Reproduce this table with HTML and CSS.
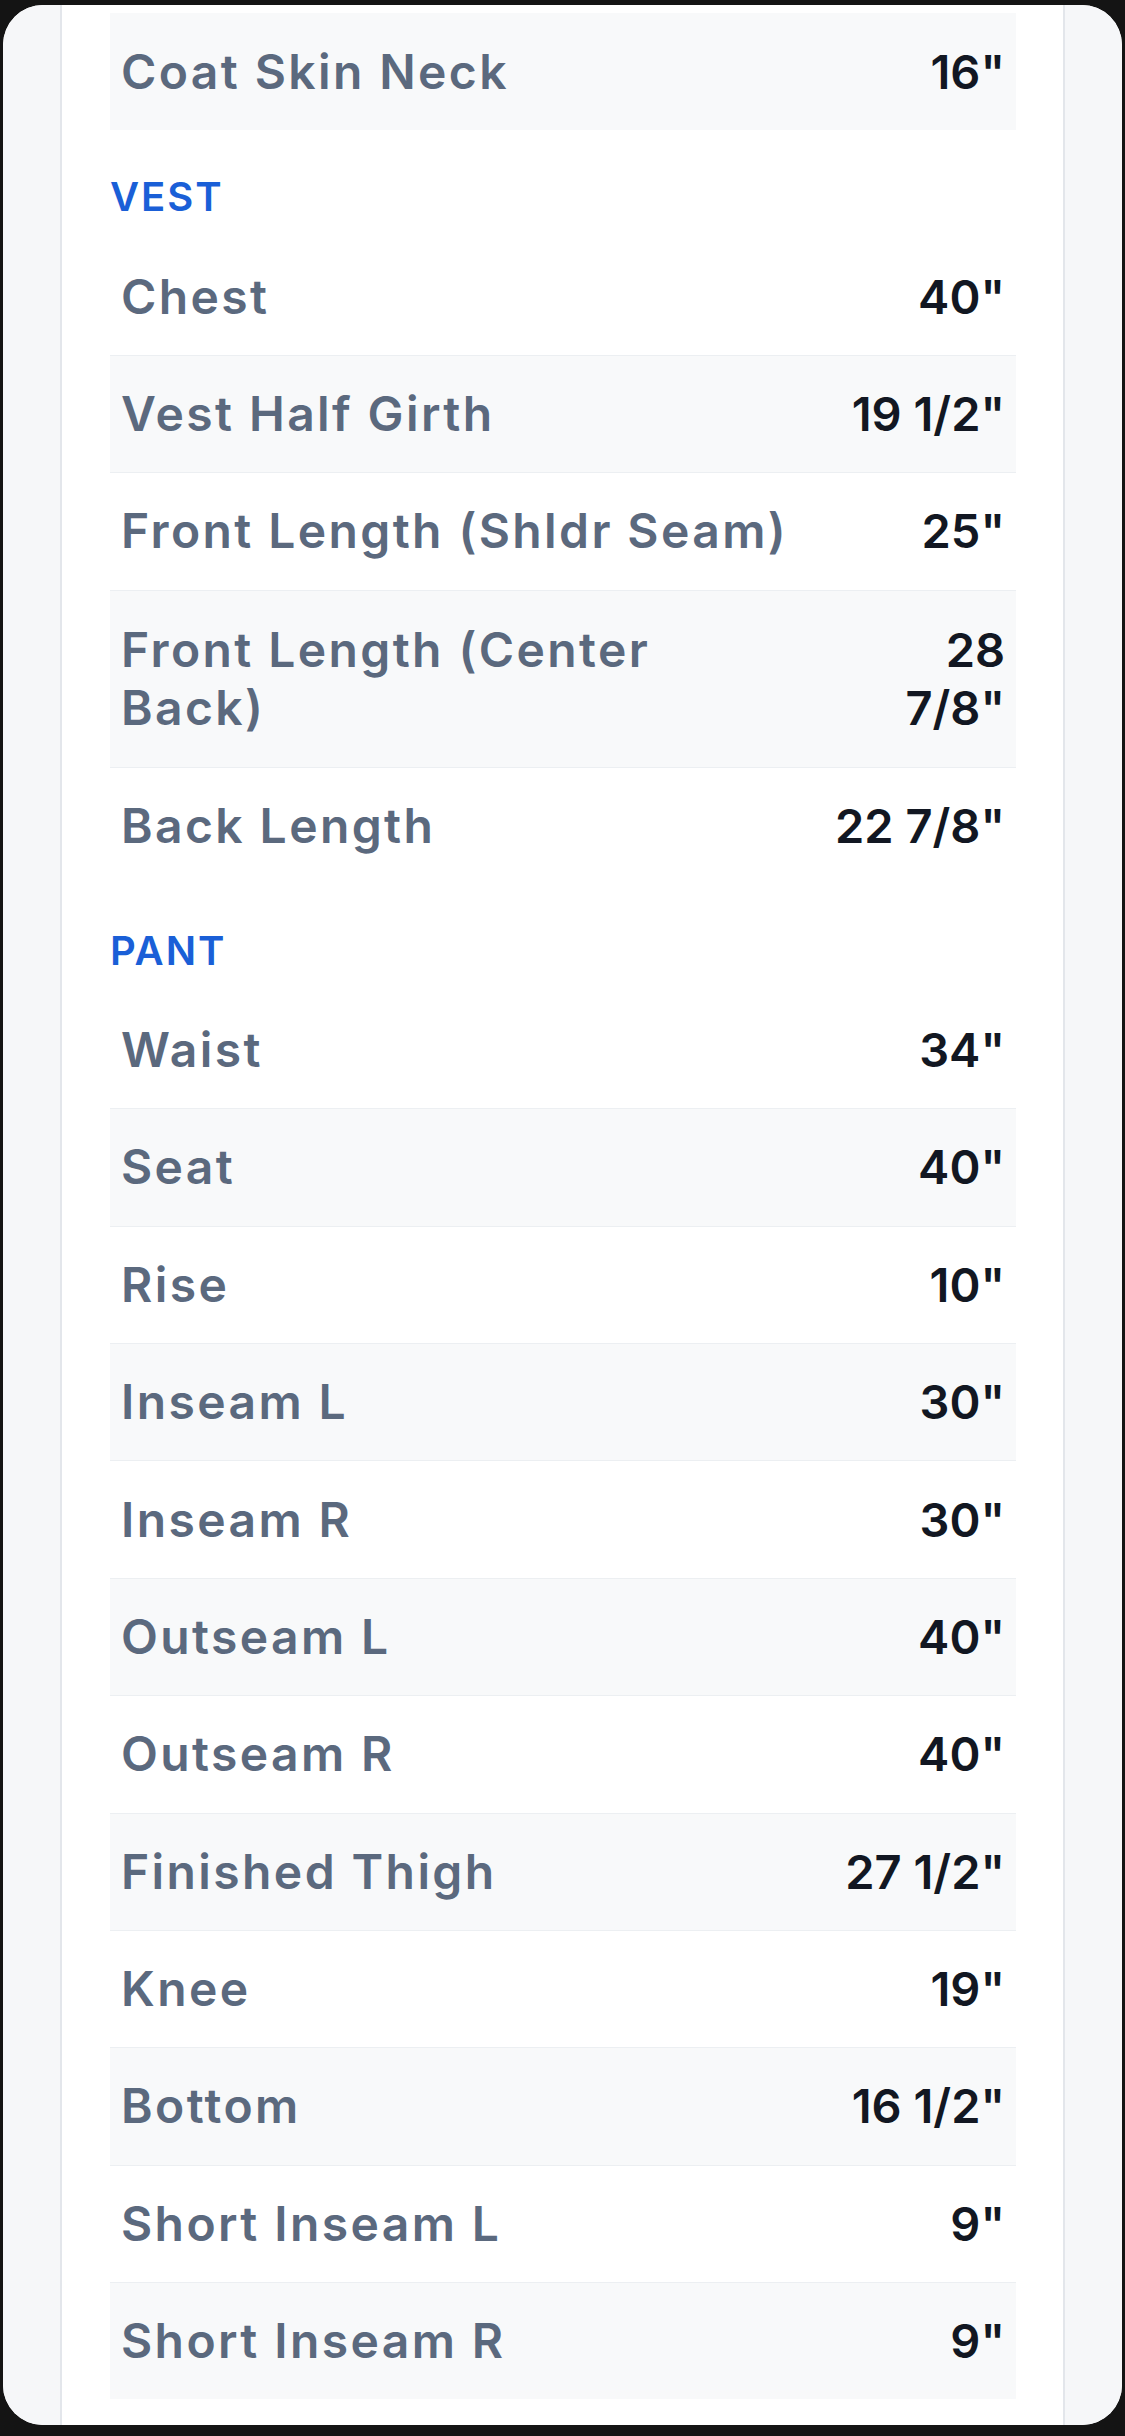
FILE: index.html
```html
<!DOCTYPE html>
<html>
<head>
<meta charset="utf-8">
<link rel="stylesheet" href="styles.css">
</head>
<body>
<div class="frame">
  <div class="gutter gutter-left"></div>
  <main class="sheet">
    <div class="rows">
      <div class="row shade"><span class="label">Coat Skin Neck</span><span class="value">16"</span></div>
    </div>
    <h2 class="section">VEST</h2>
    <div class="rows">
      <div class="row"><span class="label">Chest</span><span class="value">40"</span></div>
      <div class="row shade"><span class="label">Vest Half Girth</span><span class="value">19 1/2"</span></div>
      <div class="row"><span class="label">Front Length (Shldr Seam)</span><span class="value">25"</span></div>
      <div class="row shade tall"><span class="label">Front Length (Center<br>Back)</span><span class="value">28<br>7/8"</span></div>
      <div class="row"><span class="label">Back Length</span><span class="value">22 7/8"</span></div>
    </div>
    <h2 class="section">PANT</h2>
    <div class="rows">
      <div class="row"><span class="label">Waist</span><span class="value">34"</span></div>
      <div class="row shade"><span class="label">Seat</span><span class="value">40"</span></div>
      <div class="row"><span class="label">Rise</span><span class="value">10"</span></div>
      <div class="row shade"><span class="label">Inseam L</span><span class="value">30"</span></div>
      <div class="row"><span class="label">Inseam R</span><span class="value">30"</span></div>
      <div class="row shade"><span class="label">Outseam L</span><span class="value">40"</span></div>
      <div class="row"><span class="label">Outseam R</span><span class="value">40"</span></div>
      <div class="row shade"><span class="label">Finished Thigh</span><span class="value">27 1/2"</span></div>
      <div class="row"><span class="label">Knee</span><span class="value">19"</span></div>
      <div class="row shade"><span class="label">Bottom</span><span class="value">16 1/2"</span></div>
      <div class="row"><span class="label">Short Inseam L</span><span class="value">9"</span></div>
      <div class="row shade"><span class="label">Short Inseam R</span><span class="value">9"</span></div>
    </div>
  </main>
  <div class="gutter gutter-right"></div>
</div>
</body>
</html>
```
FILE: styles.css
```css
* { box-sizing: border-box; }
html, body {
  margin: 0;
  padding: 0;
  background: #141414;
  height: 2436px;
  overflow: hidden;
}
body {
  padding: 5px 3px 11px 3px;
  font-family: Inter, "Open Sans", "Liberation Sans", sans-serif;
}
.frame {
  height: 2420px;
  background: #ffffff;
  border-radius: 40px;
  overflow: hidden;
  display: flex;
}
.gutter {
  width: 59px;
  flex: 0 0 59px;
  background: #f6f7f9;
}
.gutter-left { border-right: 2px solid #e3e6eb; }
.gutter-right { border-left: 2px solid #e3e6eb; }
.sheet {
  flex: 1 1 auto;
  padding: 8px 47px 0 48px;
  overflow: hidden;
}
.rows { display: flex; flex-direction: column; }
.row {
  display: flex;
  justify-content: space-between;
  align-items: center;
  gap: 24px;
  padding: 29.2px 11px 29.2px 11px;
  border-top: 1px solid #eceff2;
  font-size: 47px;
  line-height: 58px;
  font-weight: 600;
}
.row.tall { padding-top: 30px; padding-bottom: 30px; }
.rows .row:first-child { border-top-color: transparent; }
.row.shade { background: #f8f9fa; }
.label { color: #5b697e; font-size: 48px; letter-spacing: 2.4px; }
.value { color: #121722; text-align: right; white-space: nowrap; }
.section {
  margin: 47px 0 20px 0;
  font-size: 40px;
  line-height: 40px;
  font-weight: 600;
  color: #1a5fd7;
  letter-spacing: 2px;
}
```
